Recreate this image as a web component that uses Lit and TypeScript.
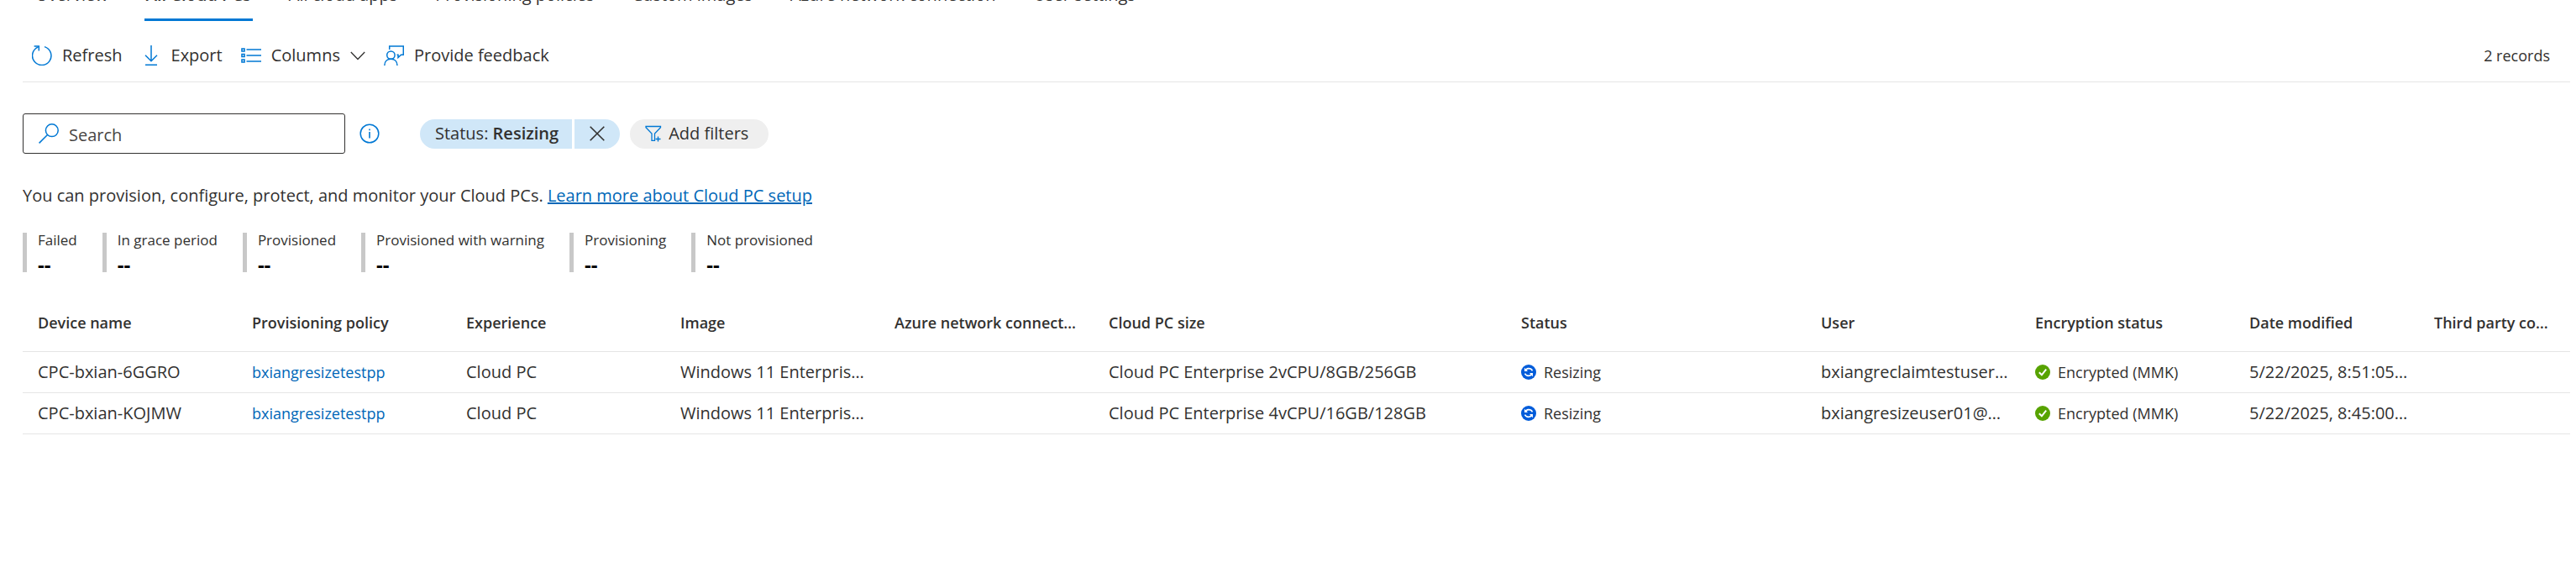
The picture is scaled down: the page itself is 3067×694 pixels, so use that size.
import { LitElement, html, css, svg } from "lit";
import { customElement } from "lit/decorators.js";

const TABS = [
  "Overview",
  "All Cloud PCs",
  "All cloud apps",
  "Provisioning policies",
  "Custom images",
  "Azure network connection",
  "User settings",
];

const METRICS = [
  "Failed",
  "In grace period",
  "Provisioned",
  "Provisioned with warning",
  "Provisioning",
  "Not provisioned",
];

// Column titles with their relative widths
const COLUMNS: [string, number][] = [
  ["Device name", 255],
  ["Provisioning policy", 255],
  ["Experience", 255],
  ["Image", 255],
  ["Azure network connect…", 255],
  ["Cloud PC size", 491],
  ["Status", 357],
  ["User", 255],
  ["Encryption status", 255],
  ["Date modified", 220],
  ["Third party co…", 180],
];
const TOTAL = COLUMNS.reduce((sum, c) => sum + c[1], 0);

const ROWS = [
  {
    name: "CPC-bxian-6GGRO",
    policy: "bxiangresizetestpp",
    size: "Cloud PC Enterprise 2vCPU/8GB/256GB",
    user: "bxiangreclaimtestuser…",
    date: "5/22/2025, 8:51:05…",
  },
  {
    name: "CPC-bxian-KOJMW",
    policy: "bxiangresizetestpp",
    size: "Cloud PC Enterprise 4vCPU/16GB/128GB",
    user: "bxiangresizeuser01@…",
    date: "5/22/2025, 8:45:00…",
  },
];

const icon = (body: unknown, cls = "", size = 24) => html`<svg
  class="icon ${cls}"
  width=${size}
  height=${size}
  viewBox="0 0 ${size} ${size}"
  fill="none"
  aria-hidden="true"
>
  ${body}
</svg>`;

const refreshIcon = icon(svg`
  <path d="M15 1.6A11.2 11.2 0 1 1 7.6 1.9" stroke-width="1.5"/>
  <path d="M2.6 .9H8.3V6.6" stroke-width="1.5"/>`);
const exportIcon = icon(svg`
  <path d="M12 0V18.6M5 11.8L12 18.8L19 11.8M5 23.2H19" stroke-width="1.5"/>`);
const columnsIcon = icon(svg`
  <path d="M1 4H4V7H1ZM1 10.500H4V13.500H1ZM1 17H4V20H1Z" stroke-width="1.6"/>
  <path d="M6.500 5H24M6.500 12H24M6.500 19H24" stroke-width="1.6"/>`);
const chevronIcon = icon(svg`<path d="M.8 5L9 13.500L17.200 5" stroke-width="1.3"/>`, "dark", 18);
const feedbackIcon = icon(svg`
  <circle cx="8.400" cy="11.600" r="4.700" stroke-width="1.5"/>
  <path d="M.8 24C.8 19 4 16.300 8.400 16.300S16 19 16 24" stroke-width="1.5"/>
  <path d="M6.700 5V.9H23.300V11.200H20.500L17 14.500V11.200H15.500" stroke-width="1.5"/>`);
const searchIcon = icon(svg`
  <circle cx="15.800" cy="8.200" r="7.400" stroke-width="1.5"/>
  <path d="M10.500 13.500L.6 23.400" stroke-width="1.5"/>`);
const infoIcon = icon(svg`
  <circle cx="12" cy="12" r="10.800" stroke-width="1.5"/>
  <path d="M12 10V17.500M12 6.500V8.300" stroke-width="1.6"/>`);
const closeIcon = icon(svg`<path d="M.7 .7L17.300 17.300M17.300 .7L.7 17.300" stroke-width="1.6"/>`, "dark", 18);
const filterIcon = icon(svg`
  <path d="M11.500 18.300H8V10L1 2.800V1.500H18.500V2.800L11.500 10Z" stroke-width="1.3"/>
  <path d="M15.500 13.500V19.500M12.500 16.500H18.500" stroke-width="1.4"/>`, "", 20);
const syncIcon = icon(svg`
  <circle cx="9" cy="9" r="9" fill="#015cda"/>
  <path d="M4 3.800V8H8L6.600 6.500C8 5.200 10 5 11.600 6.200L12.800 7.800L14.200 7C12.800 3.800 8.500 2.600 5.400 5.200Z" fill="#fff"/>
  <path d="M14 14.200V10H10L11.400 11.500C10 12.800 8 13 6.400 11.800L5.200 10.200L3.800 11C5.200 14.200 9.500 15.400 12.600 12.800Z" fill="#fff"/>`, "solid", 18);
const checkIcon = icon(svg`
  <circle cx="9" cy="9" r="9" fill="#57a300"/>
  <path d="M4.800 9.300L7.900 12.300L13.200 5.700" stroke="#fff" stroke-width="2"/>`, "solid", 18);

@customElement("app-root")
export class AppRoot extends LitElement {
  static styles = css`
    :host {
      display: block;
      overflow: hidden;
      background: #fff;
      color: #323130;
      font-family: "Open Sans", "Noto Sans", sans-serif;
      font-size: 20px;
      line-height: 28px;
    }
    button,
    input {
      font: inherit;
      color: inherit;
      border: 0;
      background: none;
      margin: 0;
      padding: 0;
    }
    a {
      color: #0067b8;
    }
    .icon {
      flex: none;
      display: block;
      stroke: #0078d4;
    }
    .dark {
      stroke: #323130;
    }
    .solid {
      stroke: none;
    }
    .tabs {
      display: flex;
      gap: 41px;
      height: 25px;
      padding-left: 40px;
      align-items: flex-end;
    }
    .tab {
      display: block;
      flex: none;
      white-space: nowrap;
      padding: 0 2px 14px;
      border-bottom: 3px solid transparent;
      color: inherit;
      text-decoration: none;
    }
    .tab.active {
      border-color: #0078d4;
      font-weight: 600;
    }
    .page {
      padding: 0 7px 0 27px;
    }
    .toolbar {
      display: flex;
      align-items: center;
      gap: 22px;
      padding: 27px 24px 17px 11px;
      border-bottom: 1px solid #e5e5e5;
    }
    .tool {
      display: flex;
      align-items: center;
      gap: 12px;
    }
    .records {
      margin-left: auto;
      font-size: 18px;
    }
    .filters {
      display: flex;
      align-items: center;
      padding-top: 37px;
    }
    .search {
      display: flex;
      align-items: center;
      gap: 12px;
      box-sizing: border-box;
      width: 384px;
      height: 48px;
      padding: 0 18px;
      border: 1px solid #323130;
      border-radius: 3px;
    }
    .search input {
      flex: 1;
      min-width: 0;
      padding-top: 3px;
      outline: 0;
    }
    .search input::placeholder {
      color: #484644;
      opacity: 1;
    }
    .info {
      margin: 0 48px 0 17px;
    }
    .pill {
      display: flex;
      align-items: center;
      height: 35px;
      background: #d0e7f8;
    }
    .pill.value {
      padding: 0 16px 0 18px;
      border-radius: 18px 0 0 18px;
      white-space: pre;
    }
    .pill.value b {
      font-weight: 600;
    }
    .pill.close {
      margin: 0 12px 0 3px;
      padding: 0 18px;
      border-radius: 0 18px 18px 0;
    }
    .pill.add {
      gap: 8px;
      padding: 0 24px 0 18px;
      border-radius: 18px;
      background: #efefef;
    }
    .intro {
      margin: 36px 0 0;
    }
    .metrics {
      display: flex;
      gap: 30px;
      margin: 30px 0 0;
    }
    .metric {
      display: flex;
      flex-direction: column;
      justify-content: space-between;
      height: 47px;
      padding-left: 13px;
      border-left: 5px solid #c8c8c8;
      font-size: 17px;
      line-height: 18px;
    }
    .metric dd {
      margin: 0;
      color: #000;
      font-size: 24px;
      font-weight: 700;
    }
    table {
      width: 100%;
      margin-top: 26px;
      border-collapse: collapse;
      table-layout: fixed;
    }
    th,
    td {
      height: 48px;
      padding: 0 0 0 18px;
      border-bottom: 1px solid #e5e5e5;
      text-align: left;
      white-space: nowrap;
    }
    th {
      height: 68px;
      font-size: 18px;
      font-weight: 600;
    }
    td .link {
      font-size: 18px;
      text-decoration: none;
    }
    .state {
      display: flex;
      align-items: center;
      gap: 9px;
      font-size: 18px;
    }
  `;

  render() {
    return html`
      <nav class="tabs">
        ${TABS.map((t, i) => html`<a class="tab ${i === 1 ? "active" : ""}" href="#">${t}</a>`)}
      </nav>
      <main class="page">
        <div class="toolbar">
          <button class="tool">${refreshIcon}Refresh</button>
          <button class="tool">${exportIcon}Export</button>
          <button class="tool">${columnsIcon}Columns${chevronIcon}</button>
          <button class="tool">${feedbackIcon}Provide feedback</button>
          <span class="records">2 records</span>
        </div>
        <div class="filters">
          <label class="search">
            ${searchIcon}
            <input type="text" placeholder="Search" aria-label="Search" />
          </label>
          <button class="info" aria-label="Search help">${infoIcon}</button>
          <button class="pill value">Status: <b>Resizing</b></button>
          <button class="pill close" aria-label="Remove filter">${closeIcon}</button>
          <button class="pill add">${filterIcon}Add filters</button>
        </div>
        <p class="intro">
          You can provision, configure, protect, and monitor your Cloud PCs.
          <a href="#">Learn more about Cloud PC setup</a>
        </p>
        <dl class="metrics">
          ${METRICS.map((m) => html`<div class="metric"><dt>${m}</dt><dd>--</dd></div>`)}
        </dl>
        <table>
          <colgroup>
            ${COLUMNS.map(([, w]) => html`<col style="width:${(w / TOTAL) * 100}%" />`)}
          </colgroup>
          <thead>
            <tr>${COLUMNS.map(([title]) => html`<th scope="col">${title}</th>`)}</tr>
          </thead>
          <tbody>
            ${ROWS.map(
              (r) => html`<tr>
                <td>${r.name}</td>
                <td><a class="link" href="#">${r.policy}</a></td>
                <td>Cloud PC</td>
                <td>Windows 11 Enterpris…</td>
                <td></td>
                <td>${r.size}</td>
                <td><span class="state">${syncIcon}Resizing</span></td>
                <td>${r.user}</td>
                <td><span class="state">${checkIcon}Encrypted (MMK)</span></td>
                <td>${r.date}</td>
                <td></td>
              </tr>`
            )}
          </tbody>
        </table>
      </main>
    `;
  }
}
